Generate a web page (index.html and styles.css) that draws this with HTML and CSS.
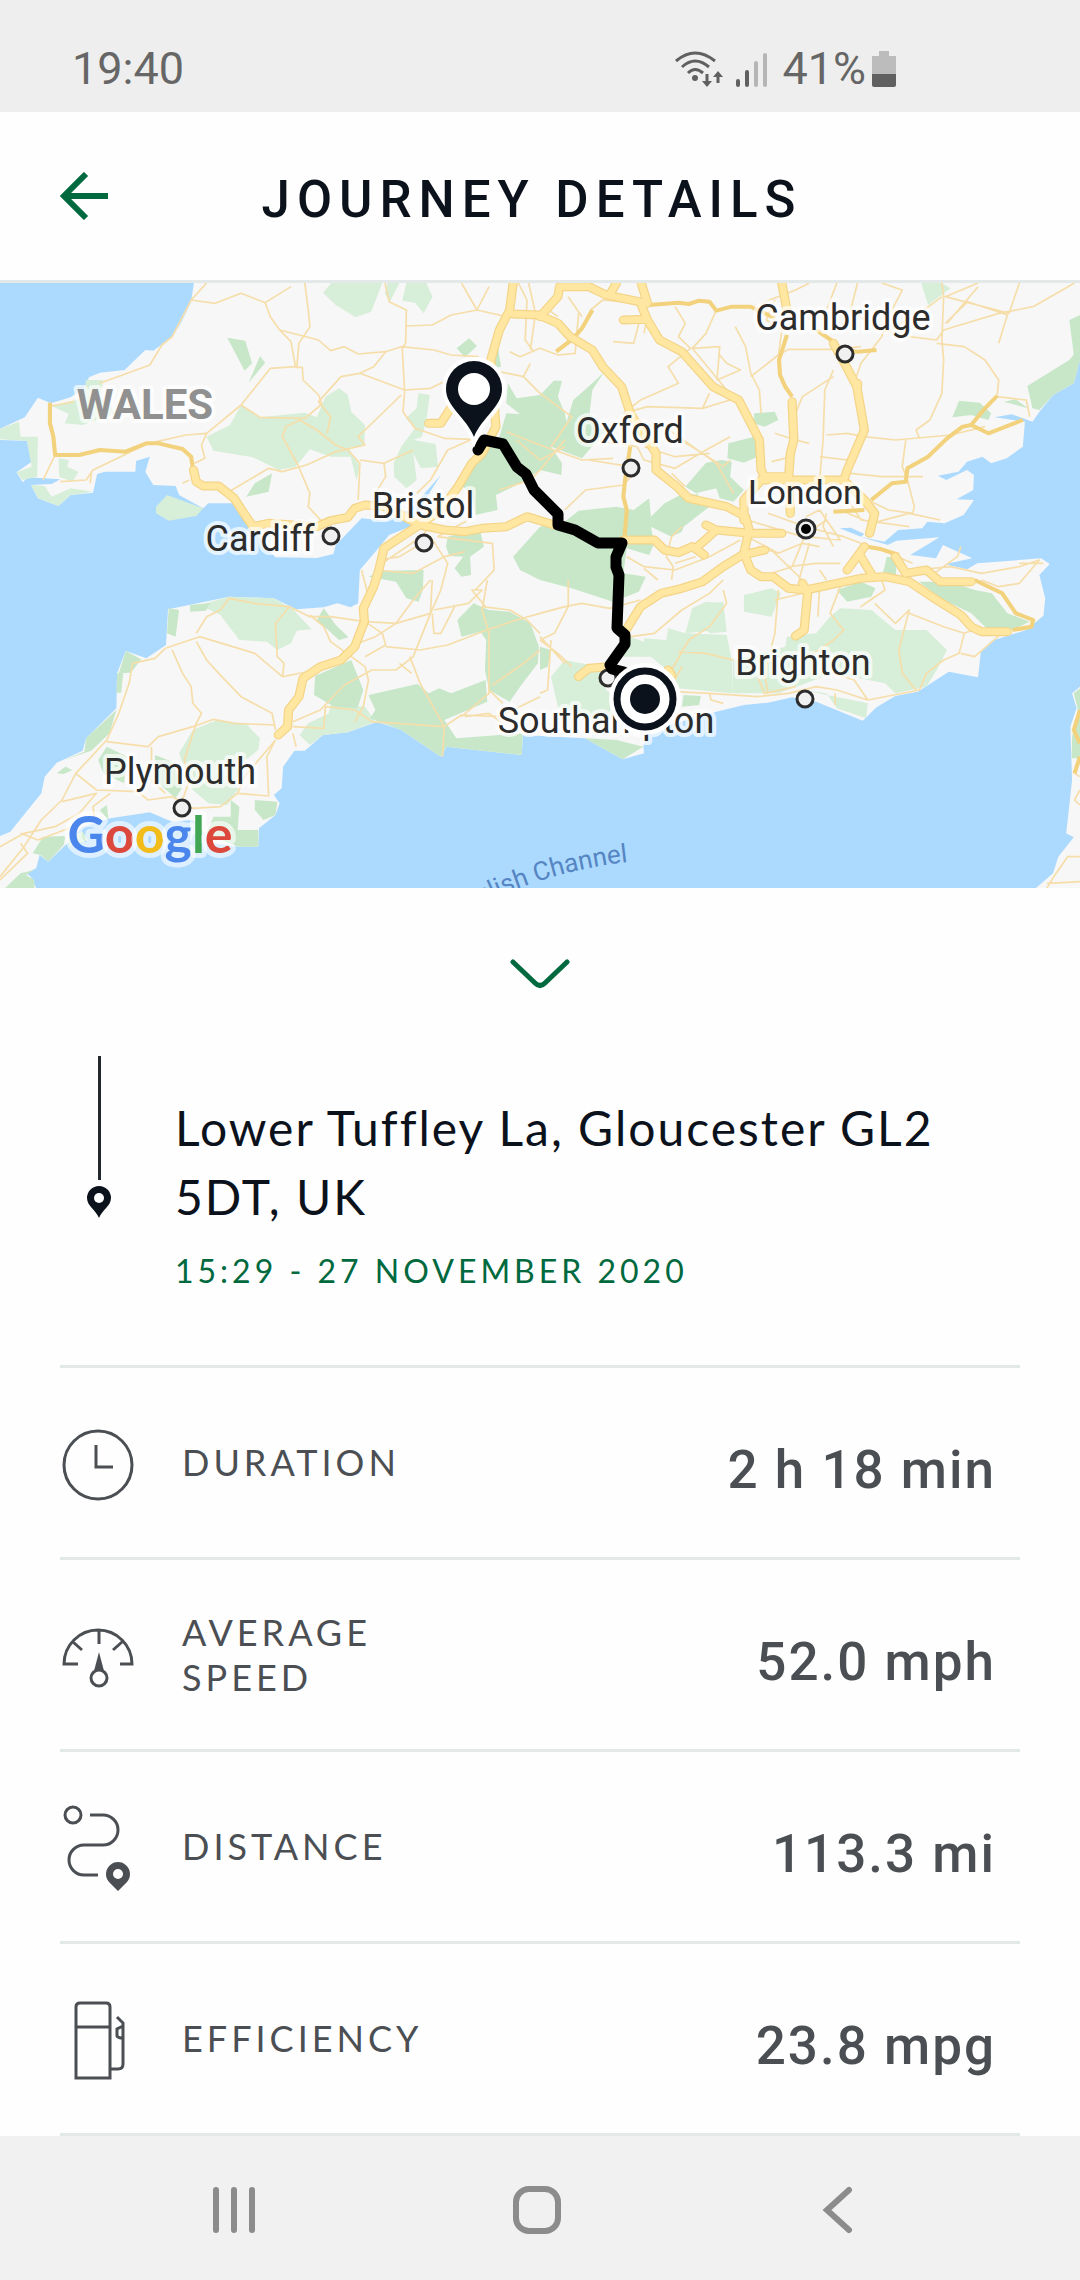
FILE: index.html
```html
<!DOCTYPE html>
<html lang="en">
<head>
    <meta charset="UTF-8">
    <meta name="viewport" content="width=device-width, initial-scale=1.0">
    <title>Journey Details</title>
    <link rel="stylesheet" href="styles.css">
</head>
<body>
    <div class="status-bar">
        <span>19:40</span>
        <div class="status-icons">
            <svg class="wifi" width="48" height="36" viewBox="0 0 48 36">
                <g fill="none" stroke="#606060" stroke-width="3">
                    <path d="M1 10Q20 -6 40 10"/>
                    <path d="M7 16Q20 4 34 16"/>
                    <path d="M13 22Q20 15 28 22"/>
                    <path d="M32 23V33M43 32V23"/>
                </g>
                <circle cx="20" cy="27" r="3" fill="#606060"/>
                <path d="M27 30H37L32 36ZM38 26H48L43 20Z" fill="#606060"/>
            </svg>
            <svg class="signal" width="32" height="36" viewBox="0 0 32 36">
                <g fill="none" stroke-width="4" stroke-linecap="round">
                    <path d="M3 30V34M12 21V34" stroke="#606060"/>
                    <path d="M21 12V34M30 4V34" stroke="#b5b5b5"/>
                </g>
            </svg>
            <span>41%</span>
            <svg class="battery" width="24" height="36" viewBox="0 0 24 36">
                <path d="M7 0H17V5H24V23H0V5H7Z" fill="#bcbcbc"/>
                <path d="M0 23H24V34Q24 36 22 36H2Q0 36 0 34Z" fill="#606060"/>
            </svg>
        </div>
    </div>

    <header class="header">
        <button class="back" aria-label="Back">
            <svg width="48" height="48" viewBox="0 0 48 48">
                <path d="M26 2L4 24L26 46M4 24H48" fill="none" stroke="#00693e" stroke-width="6"/>
            </svg>
        </button>
        <h1>JOURNEY DETAILS</h1>
    </header>

    <div class="map">
        <svg class="map-base" viewBox="0 9 3136 1815" preserveAspectRatio="none">
            <rect y="9" width="3136" height="1815" fill="#acdaff"/>

            <!-- land -->
            <g fill="#f7f7f7">
                <path d="M563 9L555 65L525 130L500 170L445 212L422 210L362 270L290 278L258 292L250 320L205 352L148 370L110 353L72 412L0 446V480L78 482L92 545L48 577L66 607L80 592L175 598L150 612L90 615L110 655L170 678L205 645L270 638L282 582L305 575H393L395 543L435 530L422 575L445 615L510 618L520 645L590 685L605 670H685L735 735L770 800L800 832L920 834L968 822L975 795L1050 715L1120 722L1190 690L1280 585L1240 650L1190 740L1130 765L1090 815L1045 870L1040 970L1018 982L980 970L940 982L860 988L795 955L665 950L550 975L488 988L482 1095L425 1135L365 1113L340 1180L338 1285L250 1375L240 1412L165 1448L130 1490L120 1540L30 1655L0 1668V1824H105L90 1790L75 1780L105 1765L115 1725L140 1745L190 1695L240 1640L320 1615L435 1597L500 1625L560 1620L620 1690L690 1700H750L752 1645L800 1605L812 1570L795 1545L818 1525L822 1460L855 1412H885L938 1365L1010 1357L1095 1325L1165 1350L1280 1430L1297 1400L1515 1425L1518 1365L1698 1375L1808 1438L1870 1420L1868 1395L1890 1350L2080 1295L2160 1275L2230 1268L2300 1252L2370 1265L2505 1322L2545 1282L2600 1248L2665 1235L2755 1175L2840 1192L2848 1115L2880 1082L2980 1050L3030 1007L3035 955L3018 885L3048 852L3023 835L2838 850L2808 868L2743 853L2823 835L2738 795L2718 835L2643 825L2728 772L2603 782L2578 795L2498 770L2568 785L2608 750L2678 745L2693 725L2743 730L2798 705L2828 660L2778 658L2826 630L2828 585L2808 570L2748 600L2723 587L2783 575L2808 545L2853 530L2878 550L2923 535L2970 500L2976 425L2888 412L2938 403L2998 425L3018 395L3058 345L3118 310L3136 240V9Z"/>
                <path d="M3136 1220L3113 1240L3126 1285L3108 1340L3113 1500L3096 1660L3118 1672L3073 1730L3058 1780L3008 1824H3136Z"/>
            </g>
            <path d="M2438 745L2470 743L2510 762L2500 770Z" fill="#acdaff"/>

            <!-- parks, light then dark -->
            <g fill="#d7eed8">
                <path d="M962 9H1110L1078 95L1032 112L975 75L938 38Z"/>
                <path d="M1125 9H1160L1132 65L1118 40Z"/>
                <path d="M1180 9H1238L1256 50L1230 100L1205 68L1168 62Z"/>
                <path d="M700 375L755 412L885 398L920 412L945 350L985 325L1010 345L1020 395L1060 435L1058 495L1015 508L1045 560L1035 600L1018 530L960 530L900 508L858 560L810 570L735 532L620 512L600 470L668 435Z"/>
                <path d="M0 446L55 425L60 470L110 470L108 590L66 600L48 577L92 560L78 482L0 478Z"/>
                <path d="M150 378L240 355L250 300L300 300L290 350L340 400L240 435L188 430L200 402Z"/>
                <path d="M170 535L200 540L195 560L228 575L210 605L172 590Z"/>
                <path d="M90 615L130 618L150 650L205 625L270 635L205 645L170 678L110 655Z"/>
                <path d="M485 645L590 685L570 708L490 722L453 700V680Z"/>
                <path d="M1215 340L1248 345L1238 420L1225 470L1200 480L1265 492L1272 560L1222 565L1200 520L1210 600L1180 625L1145 590L1143 550L1165 500L1205 445L1178 415L1210 385Z"/>
                <path d="M580 975L665 950L795 955L850 988L905 1048L862 1052L845 1090L805 1110L775 1085L695 1080L640 1005Z"/>
                <path d="M630 1320L715 1332L755 1375L750 1410L700 1450L690 1530L660 1575L605 1570L560 1530L520 1420L560 1350Z"/>
                <path d="M895 1330L955 1300L960 1275L1060 1280L1090 1325L1010 1357L938 1365L900 1395L870 1365Z"/>
                <path d="M2675 9H2735L2760 25L2695 75Z"/>
                <path d="M2035 975L2100 965L2110 1055L2060 1060L2035 1025Z"/>
                <path d="M2160 945L2240 925L2268 940L2240 1010L2160 995Z"/>
                <path d="M1800 1060L1870 1085L1870 1075L1935 1080L1940 1045L1990 1060L2110 1065L2125 1140L2128 1240L1968 1225L1950 1180L1890 1130L1800 1130Z"/>
                <path d="M1990 1060L2010 985L2050 965L2100 970L2090 1050Z"/>
                <path d="M1640 1140L1740 1160L1760 1230L1860 1300L1740 1320L1620 1280L1600 1190Z"/>
                <path d="M2128 1140L2280 1100L2285 1070L2370 1060L2410 1010L2440 985L2530 990L2600 1050L2690 1050L2750 1110L2720 1170L2690 1220L2600 1240L2570 1210L2420 1180L2260 1240L2128 1240Z"/>
                <path d="M2330 1230L2520 1270L2515 1315L2430 1285L2400 1240Z"/>
                <path d="M200 1670L240 1655L255 1680L200 1700Z"/>
            </g>
            <g fill="#c7e7c8">
                <path d="M660 173L712 182L732 250L710 272ZM755 228L770 248L722 308Z"/>
                <path d="M1362 175L1385 198L1350 232L1326 205Z"/>
                <path d="M1445 195L1455 260L1430 265Z"/>
                <path d="M1475 310L1500 355L1568 345L1608 302H1632L1620 350L1640 400L1645 425L1665 360L1730 300L1755 275L1720 330L1712 400L1760 450L1690 535L1600 500L1632 550L1630 585L1568 570L1510 610L1440 645L1445 690L1380 705L1370 640L1330 610L1380 540L1450 470L1470 400L1510 402L1470 370Z"/>
                <path d="M715 650L740 610L790 580L780 635Z"/>
                <path d="M1300 770L1340 760L1395 755L1405 800L1365 830L1368 885L1340 890L1320 865L1345 830L1305 828L1295 800Z"/>
                <path d="M1568 740L1640 725L1680 692L1790 680L1840 690L1885 655L1890 710L1930 670L1985 640L2030 645L1990 620L2050 548L2095 540L2125 545L2120 590L2160 630L2130 665L2090 655L2080 625L2020 640L2060 680L1985 740L1980 755L1950 770L1890 740L1900 790L1885 825L1820 805L1810 880L1875 890L1855 935L1780 965L1660 925L1568 900L1510 870L1490 830Z"/>
                <path d="M1070 890L1110 872L1230 870L1228 930L1215 965L1180 955L1150 905Z"/>
                <path d="M2115 490L2190 470L2200 530L2160 548L2112 535Z"/>
                <path d="M2190 400L2250 395L2260 420L2220 440L2188 430Z"/>
                <path d="M2785 362L2845 368L2878 400L2870 420L2820 405L2765 412Z"/>
                <path d="M2983 318L3105 240L3136 200V240L3118 310L3058 345L3018 390L2998 385Z"/>
                <path d="M3105 120L3136 105V240L3120 240Z"/>
                <path d="M2915 365L2950 358L2985 385Z"/>
                <path d="M490 985L520 990L510 1070L485 1060ZM552 975L610 970L598 992L552 995Z"/>
                <path d="M365 1113L410 1138L380 1178L345 1180ZM340 1180H358L352 1238H338Z"/>
                <path d="M338 1290L318 1360L265 1412L185 1440L245 1415L250 1375Z"/>
                <path d="M940 985L975 1035L1012 1072L985 1080L920 1020Z"/>
                <path d="M915 1188L1020 1140L1055 1230L1038 1285L970 1280L912 1245Z"/>
                <path d="M1070 1245L1212 1212L1245 1240L1275 1225L1310 1240L1410 1200L1415 1265L1290 1320L1325 1375L1518 1360L1515 1425L1297 1400L1280 1430L1165 1350L1075 1315L1090 1290Z"/>
                <path d="M1328 1020L1375 970L1420 990L1480 995L1540 1030L1565 1100L1562 1150L1510 1220L1480 1265L1420 1230L1408 1170L1412 1080L1395 1055L1340 1070Z"/>
                <path d="M2560 895L2575 830L2605 835L2600 900ZM2668 905L2760 905L2830 930L2880 940L2925 1000L2990 1025L2940 1050L2870 1050L2820 1000L2740 960Z"/>
                <path d="M2430 930L2500 905L2542 925L2530 950L2460 965Z"/>
                <path d="M740 1560L805 1565L800 1605L765 1620L740 1590ZM670 1560L695 1580L690 1650L750 1650L750 1700L690 1700L600 1660L620 1610L670 1610Z"/>
                <path d="M125 1670L190 1668L185 1695L140 1745L118 1725L95 1720ZM100 1770L75 1785L100 1800V1824H15L60 1780Z"/>
                <path d="M310 1400L370 1430L360 1510L300 1480L285 1440ZM450 1425L500 1445L530 1520L510 1555L450 1500ZM165 1480L190 1460L210 1470L185 1482ZM290 1590L310 1575L315 1620Z"/>
                <path d="M1698 1375L1790 1380L1868 1400L1808 1438ZM1568 1100L1600 1110L1590 1160L1568 1170Z"/>
                <path d="M1985 1245L2035 1248L2030 1275L1980 1280ZM3136 1225L3118 1240L3130 1290L3113 1370L3112 1435H3136Z"/>
            </g>

            <!-- minor roads -->
            <g fill="none" stroke="#f6deaa" stroke-width="5" stroke-linejoin="round">
                <path d="M600 9L555 60L625 70L700 40L770 68L845 20M555 60L500 170L470 195L435 255L290 310M770 68L785 110L812 150L845 185L858 260L785 265L700 375L600 460L585 495L595 535L565 550M885 9L895 90L900 140L868 190L862 262"/>
                <path d="M812 150L925 180L960 212L1000 200L1040 222L1120 215L1165 200L1260 210L1310 225L1390 230M1118 9L1130 65L1180 90L1178 190L1168 205L1175 335M1180 138L1255 135L1310 105L1385 90L1340 9M1385 90L1420 20M1385 90L1470 110M1120 215L1085 260L1045 280L990 290L925 365L960 410L950 460M1045 280L1175 330L1250 325L1300 300"/>
                <path d="M700 375L755 412L885 415L935 372L925 345L880 300L878 262L858 262M600 460L540 465L455 485M820 470L830 440L870 420L920 450L975 495L1010 510L1045 550L1040 660M820 470L865 555L900 640L895 680L940 730M670 632L780 565L820 575L890 555L975 515L1060 495L1040 470L1090 420L1165 345M1175 335L1170 395L1205 445L1290 475L1370 478L1300 510L1250 600L1210 640M1045 540L1115 550L1200 510M1115 550L1120 590L1090 640"/>
                <path d="M160 525L125 600M175 605L250 600L270 570L350 530L420 495M148 378L215 365M265 580L262 610M530 610L550 600"/>
                <path d="M1505 9L1530 60L1525 180L1550 215M1535 9L1555 100L1540 210M1480 215L1510 230L1568 205L1620 225L1670 220L1680 100M1450 275L1520 290L1568 340L1660 410L1600 500M1520 290L1540 250M1470 455L1568 495L1690 540L1780 535M1450 630L1540 600L1568 570L1640 480M1270 770L1360 720M1250 730L1230 765L1110 850M1250 770L1300 850L1280 930L1250 1000M1270 770L1430 790L1435 870L1380 930M1100 840L1160 830L1240 780M1090 870L1200 880L1290 830L1350 815M1050 870L1070 950"/>
                <path d="M1580 80L1620 110M1650 50L1690 110M1715 90L1750 60L1860 70L1880 110L1870 160M1960 80L1990 130L1970 170L2005 205L1940 260L1970 310L1860 360L1810 400M1860 110L1840 190L1780 185M2080 90L2050 160L2010 205L2090 200L2082 300L2150 270L2110 250L2085 220M2010 205L2110 330M2135 140L2165 200L2180 280L2205 330L2210 400M2250 60L2225 120L2270 150L2260 230M2180 290L2260 225L2290 208L2430 208L2500 200"/>
                <path d="M2210 70L2310 30L2350 9M2400 90L2430 9M2490 9L2470 90L2560 150L2640 170L2720 180L2740 150L2900 100L3000 80L3120 9M2735 9L2740 50L2735 180L2740 240L2735 340L2700 420L2660 450L2670 475M2560 9L2620 30L2590 90L2560 170L2500 250L2480 310M2840 9L2745 50L2930 100L2960 9M2720 190L2800 200L2860 240L2900 300L2895 350L2980 360L2990 410M2900 190L2925 105L2810 65L2745 130M2735 50L2670 100L2580 150M2750 130L2840 20"/>
                <path d="M2420 270L2395 330L2390 480L2380 600M2420 290L2330 350L2310 400M2250 460L2310 480L2350 490M2310 480L2300 530L2240 545M2400 465L2460 460L2510 470L2600 480L2760 465L2860 440M2630 480L2620 560L2635 600L2655 680L2650 700L2580 690L2520 660M2380 530L2460 540M2470 580L2560 590L2680 590M1810 400L1880 380L2040 385L2120 360M2040 385L2060 340M1960 470L2040 520L2100 560L2120 540M1930 440L2080 550L2130 640M1720 480L1850 500L1870 540L1960 565L2050 510L2120 470M1870 500L1960 530L2060 520M1950 580L1990 620"/>
                <path d="M1640 690L1700 630L1810 615L1850 570M1710 540L1830 560M1640 500L1568 540L1500 480M1980 740L1950 770L1935 830L1955 860L1950 900M1820 830L1870 860L1960 870L2060 830L2150 780M1870 865L1910 900M1960 850L2020 830"/>
                <path d="M2170 720L2250 745L2330 770L2400 720M2170 770L2260 820L2330 790L2380 800M2230 700L2340 740L2450 770L2500 790M2340 760L2300 860L2240 880M2340 770L2440 780L2400 720L2380 690M2240 810L2290 860L2330 900M2260 820L2200 800M2290 860L2370 850L2440 850M2350 790L2320 900M2400 700L2390 740L2420 800M2380 690L2340 710M2440 690L2530 730L2640 700L2730 720M2450 640L2500 720L2640 740M2540 800L2650 850M2380 870L2400 900"/>
                <path d="M2660 870L2760 860L2850 880L2960 860L3018 840L2960 910L2900 920L2850 900M2960 850L3030 850M2700 890L2780 830L2790 800"/>
                <path d="M500 1110L530 1180L555 1220L560 1270L585 1300L570 1330L535 1440L550 1500L530 1560M570 1085L600 1140L635 1180L700 1250L790 1300L800 1350M480 1105L580 1070L740 1120L820 1190L920 1170M570 1060L600 1010L640 990L665 955L740 970L840 980L800 1030L805 1130L825 1150L820 1190M840 980L900 1010L960 1010L1060 1025L1150 1030L1250 1000M480 1105L450 1135L385 1150L375 1210L345 1300L310 1380L220 1480L180 1560L120 1620L70 1700L0 1790"/>
                <path d="M310 1385L430 1400L460 1370L560 1340L620 1318L680 1330L800 1335M440 1400V1500L480 1540M220 1480L280 1530L400 1535L430 1560L500 1550L560 1585L640 1580L690 1540L780 1548L775 1430L800 1380M180 1565L280 1540L230 1600L160 1640L70 1660L0 1700M320 1540L270 1580L275 1620M800 1380L710 1490L690 1540M60 1660L110 1680L200 1645M0 1800L80 1720L60 1690"/>
                <path d="M850 1325L930 1290L1000 1215L1080 1170L1150 1170L1200 1130L1250 1000L1255 900M900 1005L940 1040L960 1085L1000 1115L1060 1160L1070 1200L1055 1280L1030 1325M1060 1025L1110 1060L1120 1095L1060 1130M1040 1090L1090 1070L1150 1030L1200 960L1250 900M1120 1100L1220 1110L1300 1095L1400 1055L1500 1020L1568 1000M1160 1150L1195 1180M1190 1130L1220 1210L1290 1340L1285 1430M850 1340L940 1345L945 1280L1030 1290L1080 1325L1290 1340M1340 1310L1420 1240L1420 1060L1400 990L1415 900M1260 990L1360 970L1400 930L1370 930L1410 980M1320 980L1280 1060L1260 1060L1255 1000M1400 980L1480 990L1530 1020L1568 1060M1420 1230L1460 1270M1430 1215L1520 1150L1568 1110M1290 1340L1340 1305L1450 1310L1568 1250M850 1360L860 1400M1350 1310L1420 1300L1460 1330"/>
                <path d="M1568 1000L1640 980L1690 970L1770 985L1860 960M1650 900L1650 980L1610 1060L1568 1080M1568 1080L1620 1120L1660 1160M1568 1070L1640 1150M1600 1080L1590 1230L1568 1240M1830 1070L1900 1060L1980 990L2060 940L2100 900M1980 1160L1960 1200L1950 1170L2000 1080L2060 1040L2110 970L2100 930M1970 1115L2050 1120L2130 1140M2260 930L2250 1060L2220 1180L2230 1240M2250 960L2370 930M2380 920L2375 1010M2440 920L2410 1000L2450 1050L2420 1080L2350 1130M2540 950L2500 980L2570 930L2560 900M2540 970L2600 1030L2640 990L2610 1110L2620 1180L2660 1230M2640 1000L2740 1040L2800 1060L2785 1120L2740 1140L2690 1180L2670 1230M2800 1060L2850 1040M2790 1120L2830 1130L2920 1050"/>
                <path d="M1960 1235L2060 1240L2200 1250L2290 1240L2370 1220L2430 1230L2520 1260L2670 1230M2420 1180L2480 1200L2520 1260M2200 1190L2220 1240L2310 1220M2060 1240L2065 1260L2100 1270M2425 1240V1275M3120 1480L3136 1490M3136 1530L3120 1560L3136 1575M3136 1730L3100 1730L3060 1790L3040 1824M3040 1810L3136 1805"/>
            </g>

            <!-- trunk roads -->
            <g fill="none" stroke="#f2d27c" stroke-width="12" stroke-linejoin="round">
                <path d="M145 368L145 430L155 470L160 525H230L290 510L365 515L425 490L460 490L530 507L555 530L560 565"/>
                <path d="M1615 215L1665 175L1690 145L1720 90M1885 75L1970 68L2000 72L2030 62L2060 65L2080 92L2125 80L2180 80L2250 115"/>
                <path d="M2285 165L2262 240L2265 285L2280 320L2300 350M2370 150L2420 185L2440 210L2490 215L2545 210"/>
                <path d="M2895 348L2860 385L2820 435L2795 440L2750 475L2695 530L2635 565L2630 605L2590 610L2530 660M2820 435L2870 460L2970 420"/>
                <path d="M1830 500L1815 600L1810 650L1820 690L1812 790"/>
                <path d="M2520 800L2560 808L2610 825M2420 695L2510 690M2830 900L2910 940L2950 1000L3000 1020L2995 1040L2940 1050"/>
                <path d="M3136 1290L3118 1350L3136 1390M3136 1430L3120 1480"/>
            </g>

            <!-- motorways: casing first, fill over it -->
            <g fill="none" stroke="#f4d487" stroke-width="27" stroke-linejoin="round" stroke-linecap="round">
                <path d="M562 570L570 605L590 618H635L680 655L705 695L735 740L780 730L920 740L960 722L1010 712L1030 685L1060 675L1120 680L1220 735L1290 750L1350 755L1400 745L1470 740L1530 710L1610 735M1810 780H1900L1930 810L1970 818L2010 800L2045 825M2020 805L2080 750L2050 735M2080 750L2180 760H2270"/>
                <path d="M1490 9L1480 90L1450 150L1425 240L1440 440L1400 520L1370 550L1330 620L1280 690L1210 740L1115 805L1100 870L1085 920L1055 985L1058 1025L1030 1100L990 1140L930 1160L880 1195L868 1250L838 1290L835 1340L808 1365M1425 250L1330 350L1280 430H1245M1490 102L1568 105"/>
                <path d="M1568 110L1620 50L1625 20L1710 20L1760 45L1880 70L1862 9M1770 45L1790 9M1575 110L1620 130L1655 170L1720 210L1750 260L1805 320L1830 400L1905 520L1905 570L1965 620L2000 655L2110 680L2165 710L2175 750L2160 820L2180 870L2210 890L2245 890L2290 925L2340 930L2430 910L2500 895L2570 890L2640 905L2720 960L2790 1005L2820 1040L2850 1055L2925 1055"/>
                <path d="M1860 70L1880 120L1915 180L1980 215L2070 320L2145 360L2205 480L2210 570L2220 590L2290 590M1810 120L1875 118M2270 9L2285 90M2300 365L2305 480L2295 520L2290 590L2295 700M2160 720V660L2210 600L2450 600L2460 570L2510 450L2488 320L2455 255L2420 190M2460 610L2510 660L2540 700L2525 760M2490 320L2490 310"/>
                <path d="M1812 1060L1860 980L1920 940L1980 925L2040 905L2100 860L2155 825L2220 810M1680 1190L1710 1165L1770 1160M1940 1170L1950 1185M2510 800L2460 870M2500 830L2535 890M2600 830L2630 880L2690 870L2730 905H2820M2330 910L2345 940L2335 1050L2310 1068"/>
            </g>
            <g fill="none" stroke="#ffe7a1" stroke-width="20" stroke-linejoin="round" stroke-linecap="round">
                <path d="M562 570L570 605L590 618H635L680 655L705 695L735 740L780 730L920 740L960 722L1010 712L1030 685L1060 675L1120 680L1220 735L1290 750L1350 755L1400 745L1470 740L1530 710L1610 735M1810 780H1900L1930 810L1970 818L2010 800L2045 825M2020 805L2080 750L2050 735M2080 750L2180 760H2270"/>
                <path d="M1490 9L1480 90L1450 150L1425 240L1440 440L1400 520L1370 550L1330 620L1280 690L1210 740L1115 805L1100 870L1085 920L1055 985L1058 1025L1030 1100L990 1140L930 1160L880 1195L868 1250L838 1290L835 1340L808 1365M1425 250L1330 350L1280 430H1245M1490 102L1568 105"/>
                <path d="M1568 110L1620 50L1625 20L1710 20L1760 45L1880 70L1862 9M1770 45L1790 9M1575 110L1620 130L1655 170L1720 210L1750 260L1805 320L1830 400L1905 520L1905 570L1965 620L2000 655L2110 680L2165 710L2175 750L2160 820L2180 870L2210 890L2245 890L2290 925L2340 930L2430 910L2500 895L2570 890L2640 905L2720 960L2790 1005L2820 1040L2850 1055L2925 1055"/>
                <path d="M1860 70L1880 120L1915 180L1980 215L2070 320L2145 360L2205 480L2210 570L2220 590L2290 590M1810 120L1875 118M2270 9L2285 90M2300 365L2305 480L2295 520L2290 590L2295 700M2160 720V660L2210 600L2450 600L2460 570L2510 450L2488 320L2455 255L2420 190M2460 610L2510 660L2540 700L2525 760M2490 320L2490 310"/>
                <path d="M1812 1060L1860 980L1920 940L1980 925L2040 905L2100 860L2155 825L2220 810M1680 1190L1710 1165L1770 1160M1940 1170L1950 1185M2510 800L2460 870M2500 830L2535 890M2600 830L2630 880L2690 870L2730 905H2820M2330 910L2345 940L2335 1050L2310 1068"/>
            </g>
        </svg>

        <svg class="map-labels" viewBox="0 0 1080 605" role="img" aria-label="Route from Southampton to Gloucester">
            <g class="town-dots">
                <circle cx="331" cy="253" r="8"/>
                <circle cx="424" cy="260" r="8"/>
                <circle cx="631" cy="185" r="8"/>
                <circle cx="845" cy="71" r="8"/>
                <circle cx="608" cy="395" r="8"/>
                <circle cx="805" cy="416" r="8"/>
                <circle cx="182" cy="525" r="8"/>
                <circle cx="806" cy="246" r="9"/>
            </g>
            <circle cx="806" cy="246" r="5"/>

            <text class="town country" x="145" y="136">WALES</text>
            <text class="town" x="260" y="268">Cardiff</text>
            <text class="town" x="423" y="235">Bristol</text>
            <text class="town" x="630" y="160">Oxford</text>
            <text class="town" x="843" y="47">Cambridge</text>
            <text class="town capital" x="805" y="221">London</text>
            <text class="town" x="803" y="392">Brighton</text>
            <text class="town" x="606" y="450">Southampton</text>
            <text class="town" x="180" y="501">Plymouth</text>

            <path id="channel" d="M400 668Q510 592 628 579" fill="none"/>
            <text class="sea"><textPath href="#channel" startOffset="100%">English Channel</textPath></text>

            <text class="google" x="150" y="570"><tspan fill="#4a86ec">G</tspan><tspan fill="#dc483c">o</tspan><tspan fill="#f2bc1b">o</tspan><tspan fill="#4a86ec">g</tspan><tspan fill="#41a754">l</tspan><tspan fill="#dc483c">e</tspan></text>

            <!-- route -->
            <path d="M478 167L484 157L503 161L517 184L526 191L534 207L558 231V242L575 247L598 260H622L616 274V284L619 292L617 345L625 352V361L610 382L612 386L624 389" fill="none" stroke="#000" stroke-width="11" stroke-linejoin="round" stroke-linecap="round"/>
            <path d="M474 154C466 134 446 124 446 106A28 28 0 0 1 502 106C502 124 482 134 474 154Z" fill="#0c121c" stroke="#fff" stroke-width="8" paint-order="stroke"/>
            <circle cx="474" cy="106" r="16" fill="#fff"/>
            <circle cx="645" cy="416" r="36" fill="#fff"/>
            <circle cx="645" cy="416" r="28" fill="#fff" stroke="#0c121c" stroke-width="7"/>
            <circle cx="645" cy="416" r="15" fill="#0c121c"/>
        </svg>
    </div>

    <main class="details">
        <button class="collapse" aria-label="Collapse map">
            <svg width="60" height="30" viewBox="0 0 60 30">
                <path d="M3 3L25 24Q30 29 35 24L57 3" fill="none" stroke="#00693e" stroke-width="5" stroke-linecap="round"/>
            </svg>
        </button>

        <section class="location">
            <div class="timeline">
                <div class="timeline-line"></div>
                <svg width="24" height="32" viewBox="0 0 24 32">
                    <path d="M12 32C9 24 0 20 0 12A12 12 0 0 1 24 12C24 20 15 24 12 32Z" fill="#0c121c"/>
                    <circle cx="12" cy="12" r="5" fill="#fff"/>
                </svg>
            </div>
            <div class="place">
                <p class="address">Lower Tuffley La, Gloucester GL2 5DT, UK</p>
                <p class="date">15:29 - 27 NOVEMBER 2020</p>
            </div>
        </section>

        <dl class="stats">
            <div class="stat">
                <svg class="stat-icon" viewBox="0 0 76 96">
                    <circle cx="38" cy="50" r="34"/>
                    <path d="M36 30V52H53"/>
                </svg>
                <dt>DURATION</dt>
                <dd>2 h 18 min</dd>
            </div>
            <div class="stat">
                <svg class="stat-icon" viewBox="0 0 76 96">
                    <path d="M18 57H4A34 34 0 0 1 72 57H60M39 24V37M13 35L22 43M62 35L53 43"/>
                    <path d="M39 45L34 64H44Z" class="solid"/>
                    <circle cx="39" cy="71" r="8"/>
                </svg>
                <dt>AVERAGE SPEED</dt>
                <dd>52.0 mph</dd>
            </div>
            <div class="stat">
                <svg class="stat-icon" viewBox="0 0 76 96">
                    <circle cx="13" cy="16" r="8"/>
                    <path d="M30 16H43A15 15 0 0 1 43 46H24A15 15 0 0 0 24 76H38"/>
                    <path d="M58 92L49 83A12 12 0 1 1 67 83ZM58 70A5 5 0 1 0 58 80A5 5 0 1 0 58 70Z" class="solid" fill-rule="evenodd"/>
                </svg>
                <dt>DISTANCE</dt>
                <dd>113.3 mi</dd>
            </div>
            <div class="stat">
                <svg class="stat-icon" viewBox="0 0 76 96">
                    <path d="M16 87V16Q16 12 20 12H46Q50 12 50 16V87ZM16 36H50"/>
                    <path d="M57 26L63 32V73Q63 78 58 78H50M63 35L57 38V45Q58 47 63 47"/>
                </svg>
                <dt>EFFICIENCY</dt>
                <dd>23.8 mpg</dd>
            </div>
        </dl>
    </main>

    <nav class="nav-bar">
        <button aria-label="Recent apps">
            <svg width="48" height="48" viewBox="0 0 48 48"><path d="M5 4V44M23 4V44M41 4V44"/></svg>
        </button>
        <button aria-label="Home">
            <svg width="48" height="48" viewBox="0 0 48 48"><rect x="3" y="3" width="42" height="42" rx="13"/></svg>
        </button>
        <button aria-label="Back">
            <svg width="48" height="48" viewBox="0 0 48 48"><path d="M34 4L12 24L34 44"/></svg>
        </button>
    </nav>
</body>
</html>
```
FILE: styles.css
```css
* {
    box-sizing: border-box;
}
body {
    margin: 0;
    min-height: 100vh;
    display: flex;
    flex-direction: column;
    background-color: #fefefe;
    font-family: Lato, "Open Sans", sans-serif;
    color: #0c121c;
}
button {
    padding: 0;
    border: none;
    background: none;
    cursor: pointer;
}
svg {
    display: block;
}

.status-bar {
    height: 112px;
    padding: 26px 184px 0 72px;
    display: flex;
    align-items: center;
    justify-content: space-between;
    background-color: #eeeeee;
    font-family: Roboto, sans-serif;
    font-size: 45px;
    line-height: 46px;
    color: #666;
}
.status-icons {
    display: flex;
    align-items: center;
}
.signal {
    margin: 0 15px 0 12px;
}
.battery {
    margin-left: 6px;
}

.header {
    height: 171px;
    padding: 0 124px 0 60px;
    display: flex;
    align-items: center;
    border-bottom: 3px solid #e3e8e8;
}
.header h1 {
    flex: 1;
    margin: 0;
    padding-top: 6px;
    text-align: center;
    font-family: Roboto, sans-serif;
    font-size: 51px;
    font-weight: 500;
    letter-spacing: 7px;
}

.map {
    position: relative;
    aspect-ratio: 1080 / 605;
    overflow: hidden;
}
.map-base {
    width: 100%;
    height: 100%;
}
/* labels and markers lie over the base map */
.map-labels {
    position: absolute;
    top: 0;
    left: 0;
    width: 100%;
    height: 100%;
}
.town-dots circle {
    fill: #f0f0f0;
    stroke: #2c2c2c;
    stroke-width: 3px;
}
.town {
    font-family: Roboto, sans-serif;
    font-size: 36px;
    fill: #2c2c2c;
    text-anchor: middle;
    stroke: rgba(255, 255, 255, 0.7);
    stroke-width: 8px;
    stroke-linejoin: round;
    paint-order: stroke;
}
.capital {
    font-size: 34px;
}
.country {
    font-size: 42px;
    font-weight: bold;
    fill: #909090;
}
.sea {
    font-family: Roboto, sans-serif;
    font-size: 26px;
    fill: #5585c2;
    text-anchor: end;
}
.google {
    font-family: Lato, sans-serif;
    font-size: 52px;
    font-weight: bold;
    text-anchor: middle;
    stroke: rgba(255, 255, 255, 0.6);
    stroke-width: 10px;
    stroke-linejoin: round;
    paint-order: stroke;
}

.details {
    flex: 1;
    padding: 0 60px;
}
.collapse {
    display: block;
    margin: 0 auto;
    padding: 71px 20px 67px;
}

.location {
    display: flex;
    gap: 37px;
    padding-bottom: 74px;
}
.timeline {
    width: 78px;
    display: flex;
    flex-direction: column;
    align-items: center;
    gap: 6px;
}
.timeline-line {
    width: 3px;
    height: 124px;
    background-color: #23282f;
}
.place {
    flex: 1;
    padding-top: 37px;
}
.address {
    max-width: 790px;
    margin: 0;
    font-size: 48px;
    line-height: 69px;
    letter-spacing: 2px;
}
.date {
    margin: 20px 0 0;
    font-size: 32px;
    line-height: 40px;
    letter-spacing: 4px;
    color: #00693e;
}

.stats {
    margin: 0;
    border-top: 3px solid #e3e8e8;
}
.stat {
    height: 192px;
    padding-right: 24px;
    display: flex;
    align-items: center;
    border-bottom: 3px solid #e3e8e8;
    color: #4b4f53;
}
.stat-icon {
    width: 76px;
    height: 96px;
    margin-right: 46px;
    fill: none;
    stroke: #4b4f53;
    stroke-width: 3px;
}
.stat-icon .solid {
    fill: #4b4f53;
    stroke: none;
}
.stat dt {
    width: 260px;
    font-size: 36px;
    line-height: 45px;
    letter-spacing: 4px;
}
.stat dd {
    margin: 0 0 0 auto;
    padding-top: 14px;
    font-family: Roboto, sans-serif;
    font-size: 53px;
    font-weight: 500;
    letter-spacing: 2px;
}

.nav-bar {
    height: 144px;
    padding: 4px 90px 0 84px;
    display: grid;
    grid-template-columns: repeat(3, 1fr);
    align-items: center;
    justify-items: center;
    background-color: #f1f1f1;
}
.nav-bar svg {
    fill: none;
    stroke: #8c8c8c;
    stroke-width: 6px;
    stroke-linecap: round;
}
```
